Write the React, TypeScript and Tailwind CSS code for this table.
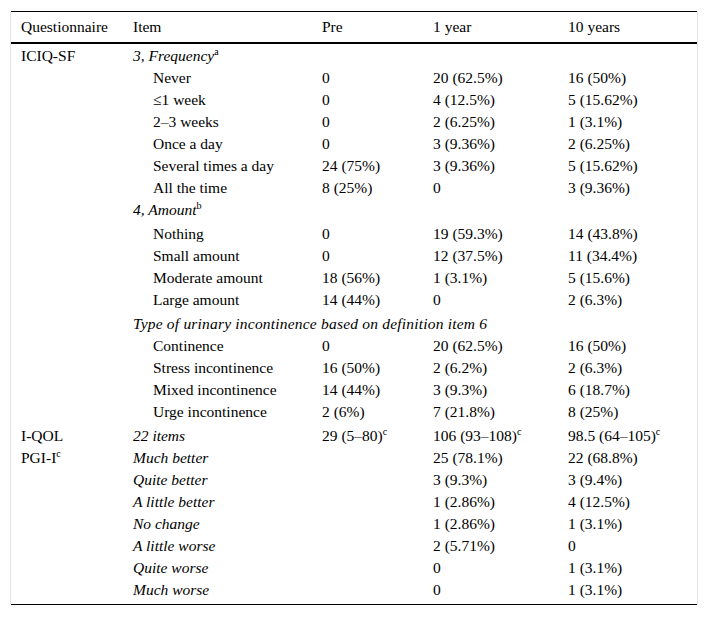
import React from "react";

type Row = {
  q?: React.ReactNode;
  item: React.ReactNode;
  italic?: boolean;
  indent?: boolean;
  pre?: React.ReactNode;
  y1?: React.ReactNode;
  y10?: React.ReactNode;
  extra?: boolean;
  wide?: boolean;
};

const Sup = ({ c }: { c: string }) => (
  <span className="relative -top-[6px] text-[10px] not-italic leading-none">{c}</span>
);

const rows: Row[] = [
  { q: "ICIQ-SF", item: <>3, Frequency<Sup c="a" /></>, italic: true },
  { item: "Never", indent: true, pre: "0", y1: "20 (62.5%)", y10: "16 (50%)" },
  { item: "≤1 week", indent: true, pre: "0", y1: "4 (12.5%)", y10: "5 (15.62%)" },
  { item: "2–3 weeks", indent: true, pre: "0", y1: "2 (6.25%)", y10: "1 (3.1%)" },
  { item: "Once a day", indent: true, pre: "0", y1: "3 (9.36%)", y10: "2 (6.25%)" },
  { item: "Several times a day", indent: true, pre: "24 (75%)", y1: "3 (9.36%)", y10: "5 (15.62%)" },
  { item: "All the time", indent: true, pre: "8 (25%)", y1: "0", y10: "3 (9.36%)" },
  { item: <>4, Amount<Sup c="b" /></>, italic: true, extra: true },
  { item: "Nothing", indent: true, pre: "0", y1: "19 (59.3%)", y10: "14 (43.8%)" },
  { item: "Small amount", indent: true, pre: "0", y1: "12 (37.5%)", y10: "11 (34.4%)" },
  { item: "Moderate amount", indent: true, pre: "18 (56%)", y1: "1 (3.1%)", y10: "5 (15.6%)" },
  { item: "Large amount", indent: true, pre: "14 (44%)", y1: "0", y10: "2 (6.3%)", extra: true },
  { item: "Type of urinary incontinence based on definition item 6", italic: true, wide: true },
  { item: "Continence", indent: true, pre: "0", y1: "20 (62.5%)", y10: "16 (50%)" },
  { item: "Stress incontinence", indent: true, pre: "16 (50%)", y1: "2 (6.2%)", y10: "2 (6.3%)" },
  { item: "Mixed incontinence", indent: true, pre: "14 (44%)", y1: "3 (9.3%)", y10: "6 (18.7%)" },
  { item: "Urge incontinence", indent: true, pre: "2 (6%)", y1: "7 (21.8%)", y10: "8 (25%)", extra: true },
  {
    q: "I-QOL",
    item: "22 items",
    italic: true,
    pre: <>29 (5–80)<Sup c="c" /></>,
    y1: <>106 (93–108)<Sup c="c" /></>,
    y10: <>98.5 (64–105)<Sup c="c" /></>,
  },
  { q: <>PGI-I<Sup c="c" /></>, item: "Much better", italic: true, y1: "25 (78.1%)", y10: "22 (68.8%)" },
  { item: "Quite better", italic: true, y1: "3 (9.3%)", y10: "3 (9.4%)" },
  { item: "A little better", italic: true, y1: "1 (2.86%)", y10: "4 (12.5%)" },
  { item: "No change", italic: true, y1: "1 (2.86%)", y10: "1 (3.1%)" },
  { item: "A little worse", italic: true, y1: "2 (5.71%)", y10: "0" },
  { item: "Quite worse", italic: true, y1: "0", y10: "1 (3.1%)" },
  { item: "Much worse", italic: true, y1: "0", y10: "1 (3.1%)" },
];

const grid = "grid grid-cols-[112px_189px_111px_135px_139px]";

export default function App() {
  return (
    <div
      className="bg-white w-[708px] h-[617px] pt-[11px] text-black text-[15.5px]"
      style={{ fontFamily: '"Liberation Serif", "Times New Roman", serif' }}
    >
      <div className="ml-[10px] w-[688px] border-x border-[#e6e6e6]">
        <div className="border-t border-b border-black">
          <div className={`${grid} h-[32px] items-center border-b-2 border-black`}>
            <div className="pl-[10px] whitespace-nowrap">Questionnaire</div>
            <div className="pl-[10px] whitespace-nowrap">Item</div>
            <div className="pl-[10px] whitespace-nowrap">Pre</div>
            <div className="pl-[10px] whitespace-nowrap">1 year</div>
            <div className="pl-[10px] whitespace-nowrap">10 years</div>
          </div>
          <div className="pt-[1px] pb-[3px]">
            {rows.map((r, i) => (
              <div
                key={i}
                className={`${grid} ${r.extra ? "h-[24px] pb-[2px]" : "h-[22px]"} items-center leading-[22px]`}
              >
                <div className="pl-[10px] whitespace-nowrap">{r.q}</div>
                <div
                  className={`${r.indent ? "pl-[30px]" : "pl-[10px]"} ${r.italic ? "italic" : ""} ${r.wide ? "tracking-[0.2px]" : ""} whitespace-nowrap`}
                >
                  {r.item}
                </div>
                <div className="pl-[10px] whitespace-nowrap">{r.pre}</div>
                <div className="pl-[10px] whitespace-nowrap">{r.y1}</div>
                <div className="pl-[10px] whitespace-nowrap">{r.y10}</div>
              </div>
            ))}
          </div>
        </div>
      </div>
    </div>
  );
}
